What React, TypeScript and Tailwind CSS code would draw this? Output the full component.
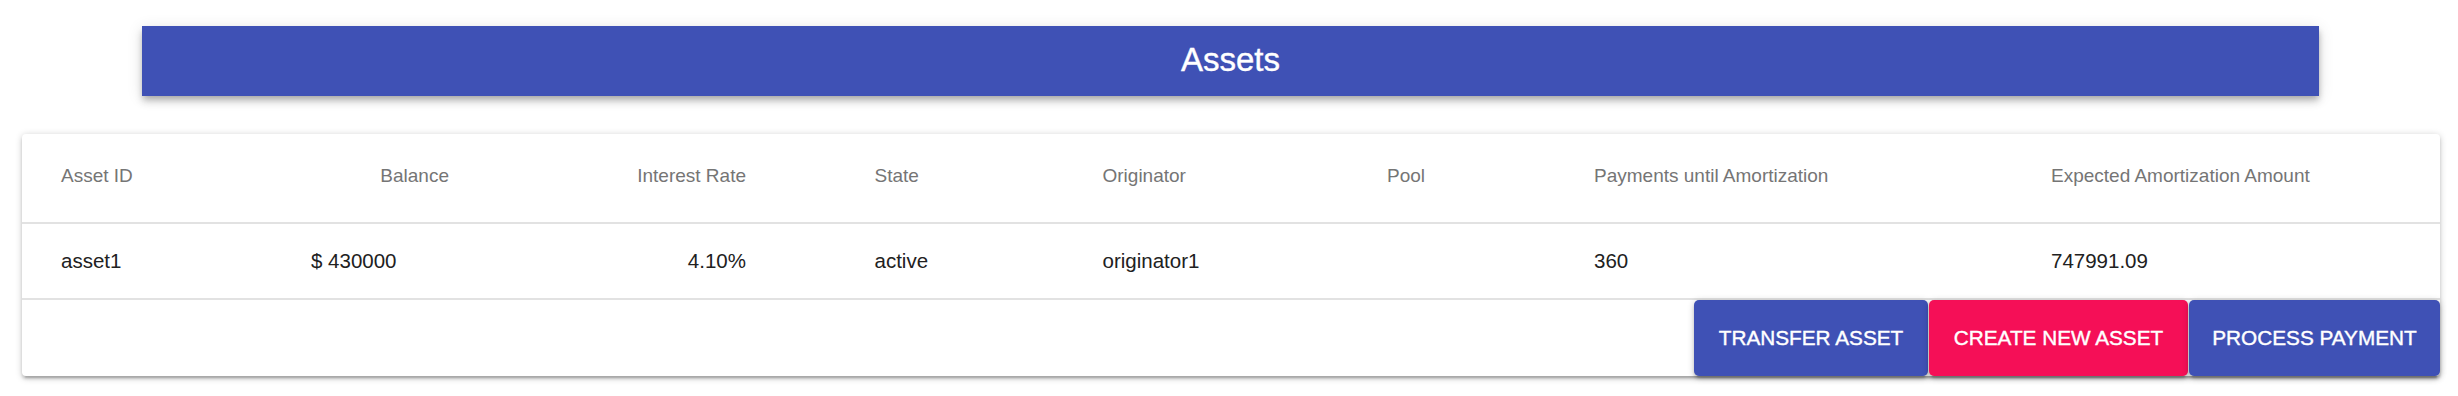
import React from "react";

const cols = "grid grid-cols-[250px_266.5px_297px_228px_284.5px_207px_457px_1fr]";

type Cell = { text: string; align: "left" | "right" };

const headers: Cell[] = [
  { text: "Asset ID", align: "left" },
  { text: "Balance", align: "right" },
  { text: "Interest Rate", align: "right" },
  { text: "State", align: "left" },
  { text: "Originator", align: "left" },
  { text: "Pool", align: "left" },
  { text: "Payments until Amortization", align: "left" },
  { text: "Expected Amortization Amount", align: "left" },
];

const row: Cell[] = [
  { text: "asset1", align: "left" },
  { text: "$ 430000", align: "left" },
  { text: "4.10%", align: "right" },
  { text: "active", align: "left" },
  { text: "originator1", align: "left" },
  { text: "", align: "left" },
  { text: "360", align: "left" },
  { text: "747991.09", align: "left" },
];

const btnShadow =
  "shadow-[0px_1.5px_7.5px_0px_rgba(0,0,0,0.2),0px_3px_3px_0px_rgba(0,0,0,0.14),0px_4.5px_1.5px_-3px_rgba(0,0,0,0.12)]";

export default function App() {
  return (
    <div className="w-[2458px] h-[396px] bg-white pt-[26px] font-['Liberation_Sans',Arial,sans-serif]">
      <div className="ml-[142px] w-[2177px] h-[70px] bg-[#3f51b5] flex items-center justify-center shadow-[0px_3px_6px_-1.5px_rgba(0,0,0,0.2),0px_6px_7.5px_0px_rgba(0,0,0,0.14),0px_1.5px_15px_0px_rgba(0,0,0,0.12)]">
        <span className="text-white text-[33px] leading-none pb-[3px] [-webkit-text-stroke:0.4px_white]">Assets</span>
      </div>

      <div className="mt-[38px] ml-[22px] w-[2418px] bg-white rounded-[4px] shadow-[0px_1.5px_7.5px_0px_rgba(0,0,0,0.2),0px_3px_3px_0px_rgba(0,0,0,0.14),0px_4.5px_1.5px_-3px_rgba(0,0,0,0.12)]">
        <div className={`${cols} h-[90px] border-b-2 border-[#e2e2e2]`}>
          {headers.map((h, i) => (
            <div
              key={i}
              className={
                h.align === "right"
                  ? "flex items-center justify-end pr-[89.5px] pb-[4px] text-[19px] text-[#757575]"
                  : "flex items-center pl-[39px] pb-[4px] text-[19px] text-[#757575]"
              }
            >
              {h.text}
            </div>
          ))}
        </div>
        <div className={`${cols} h-[76px] border-b-2 border-[#e2e2e2]`}>
          {row.map((c, i) => (
            <div
              key={i}
              className={
                c.align === "right"
                  ? "flex items-center justify-end pr-[89.5px] text-[20.5px] text-[#212121]"
                  : "flex items-center pl-[39px] text-[20.5px] text-[#212121]"
              }
            >
              {c.text}
            </div>
          ))}
        </div>
        <div className="flex justify-end gap-[1px] h-[76px]">
          <button className={`w-[234px] h-full rounded-[5px] bg-[#3f51b5] text-white text-[20.75px] [-webkit-text-stroke:0.4px_white] ${btnShadow}`}>
            TRANSFER ASSET
          </button>
          <button className={`w-[259px] h-full rounded-[5px] bg-[#f50f57] text-white text-[20.75px] [-webkit-text-stroke:0.4px_white] ${btnShadow}`}>
            CREATE NEW ASSET
          </button>
          <button className={`w-[251px] h-full rounded-[5px] bg-[#3f51b5] text-white text-[20.75px] [-webkit-text-stroke:0.4px_white] ${btnShadow}`}>
            PROCESS PAYMENT
          </button>
        </div>
      </div>
    </div>
  );
}
